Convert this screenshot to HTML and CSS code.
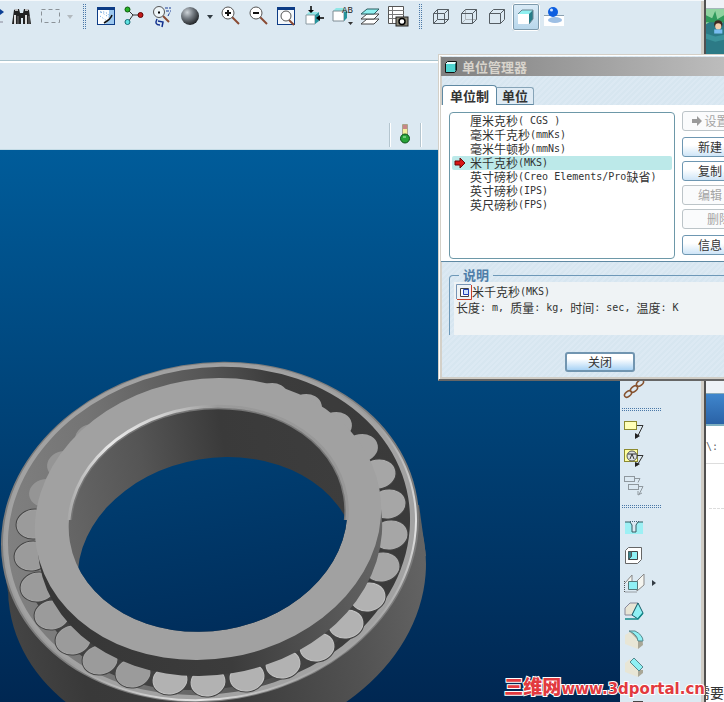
FILE: index.html
```
<!DOCTYPE html>
<html lang="zh-CN">
<head>
  <meta charset="UTF-8" />
  <meta name="viewport" content="width=device-width, initial-scale=1.0" />
  <title>单位管理器</title>
  <link rel="stylesheet" href="styles.css">
</head>
<body>
  <div class="desktop">
    <main class="cad">
      <div class="toolbar">
        <button class="tool tool-cut" aria-label="选项"><svg viewBox="0 0 8 28"><path d="M0 6l4 3-4 3z" fill="#0b3f94"/><path d="M0 19h3" stroke="#889"/></svg></button>
        <button class="tool" aria-label="查找"><svg viewBox="0 0 28 28"><path d="M6 7l2-1h3l1 4h3l1-4h3l2 1 2 14h-8v-6h-2v6H4z" fill="#222"/><path d="M7 7h3M17 7h3" stroke="#bbb" stroke-width="2"/><path d="M7 12v9M18 12v9" stroke="#ddd" stroke-width="2"/><path d="M10 13v8M21 13v8" stroke="#777"/></svg></button>
        <button class="tool" aria-label="选择框"><svg viewBox="0 0 28 28"><rect x="5.500" y="6.500" width="18" height="13" fill="none" stroke="#8b9298" stroke-dasharray="4 3"/></svg></button>
        <button class="drop pale" aria-label="更多选择"></button>
        <span class="grip"></span>
        <button class="tool" aria-label="重画"><svg viewBox="0 0 28 28"><rect x="5.500" y="4.500" width="17" height="17" fill="#fff" stroke="#0d3c86"/><path d="M5 4h18v3H5z" fill="#0d3c86"/><path d="M17 7h5v14h-9l4-4z" fill="#9cc8ef"/><path d="M9 9l9 6M8 13l7 5" stroke="#4f9ae0" stroke-dasharray="1 2"/><path d="M20 12q-1 4-8 8" stroke="#111" stroke-width="1.500" fill="none"/><path d="M8 9q7-1 10 5" stroke="#3a82cc" stroke-dasharray="1 2" fill="none"/></svg></button>
        <button class="tool" aria-label="模型树"><svg viewBox="0 0 28 28"><path d="M8 7l5 5h9M8 19l5-7" stroke="#333" fill="none"/><circle cx="7.500" cy="6.500" r="2.500" fill="#27b327" stroke="#0a5c0a"/><circle cx="20.500" cy="12" r="2.500" fill="#c21a1a" stroke="#5f0505"/><circle cx="7.500" cy="19" r="2.500" fill="#5fe3e3" stroke="#126a72"/></svg></button>
        <button class="tool" aria-label="重定向"><svg viewBox="0 0 28 28"><path d="M15 13l6 6" stroke="#8a4a33" stroke-width="2"/><circle cx="11" cy="9" r="5.500" fill="#eef5f8" stroke="#555"/><path d="M10 9.500h2" stroke="#000" stroke-width="2"/><path d="M17 5h6M18 8h5M20 13l2-4" stroke="#1a3c96" stroke-dasharray="3 1"/><path d="M9 16q-3 6 3 6M10 18l5 1-1 5" stroke="#102f8e" stroke-width="1.500" fill="none"/></svg></button>
        <button class="tool" aria-label="外观库"><svg viewBox="0 0 28 28"><defs><radialGradient id="ball" cx=".35" cy=".3" r=".75"><stop offset="0" stop-color="#cdd3d8"/><stop offset=".45" stop-color="#747b82"/><stop offset="1" stop-color="#1c1f22"/></radialGradient></defs><circle cx="14" cy="13" r="9" fill="url(#ball)"/></svg></button>
        <button class="drop" aria-label="外观选项"></button>
        <button class="tool" aria-label="放大"><svg viewBox="0 0 28 28"><path d="M16 14l7 7" stroke="#8a4a33" stroke-width="2"/><circle cx="12" cy="10" r="6" fill="#fff" stroke="#555"/><path d="M9 10h6M12 7v6" stroke="#111" stroke-width="2"/></svg></button>
        <button class="tool" aria-label="缩小"><svg viewBox="0 0 28 28"><path d="M16 14l7 7" stroke="#8a4a33" stroke-width="2"/><circle cx="12" cy="10" r="6" fill="#fff" stroke="#555"/><path d="M9 10h6" stroke="#111" stroke-width="2"/></svg></button>
        <button class="tool" aria-label="重新调整"><svg viewBox="0 0 28 28"><rect x="5.500" y="4.500" width="17" height="17" fill="#f4f8fb" stroke="#0d3c86"/><path d="M5 4h18v3H5z" fill="#0d3c86"/><path d="M17 17l5 5" stroke="#8a4a33" stroke-width="2"/><circle cx="14" cy="13" r="5" fill="#fff" stroke="#555"/></svg></button>
        <button class="tool" aria-label="视图方向"><svg viewBox="0 0 28 28"><path d="M6 12l3-3h9l-3 3z" fill="#8fe6e6"/><path d="M6 12h9v9H6z" fill="#fff" stroke="#8b9aa2"/><path d="M15 12l4-3v9l-4 3z" fill="#28949c"/><path d="M11 3v6M24 15h-6" stroke="#000" stroke-width="1.500"/><path d="M8 7h6l-3 3zM20 12v6l-4-3z" fill="#000"/></svg></button>
        <button class="tool" aria-label="视图列表"><svg viewBox="0 0 28 28"><path d="M5 8l3-3h8l2 3z" fill="#8fe6e6"/><path d="M5 8h11v10H5z" fill="#fff" stroke="#7f8c94"/><path d="M16 9l3-1v7l-3 3z" fill="#28949c"/><path d="M20 19h5l-2.500 3z" fill="#333"/><text x="14" y="10" class="icon-text">AB</text></svg></button>
        <button class="tool" aria-label="层"><svg viewBox="0 0 28 28"><path d="M5 21l6-5h12l-5 5z" fill="#fff" stroke="#444"/><path d="M5 16l6-5h12l-5 5z" fill="#fff" stroke="#444"/><path d="M5 11l6-5h12l-5 5z" fill="#8ff0f0" stroke="#2c5c60"/></svg></button>
        <button class="tool" aria-label="视图管理器"><svg viewBox="0 0 28 28"><path d="M4.500 3.500h15v17h-15z" fill="#fff" stroke="#555"/><path d="M5 7.500h15M5 11.500h15M5 15.500h8M8.500 4v16" stroke="#777"/><rect x="12" y="14" width="12" height="9" fill="#8b8778" stroke="#222"/><circle cx="18" cy="18.500" r="3" fill="#fff" stroke="#000" stroke-width="1.500"/></svg></button>
        <span class="grip"></span>
        <button class="tool" aria-label="线框"><svg viewBox="0 0 28 28"><path d="M5.500 10.500h11v10h-11zM9.500 6.500h11v10h-11zM5.500 10.500l4-4M16.500 10.500l4-4M5.500 20.500l4-4M16.500 20.500l4-4" fill="none" stroke="#555d63"/></svg></button>
        <button class="tool" aria-label="隐藏线"><svg viewBox="0 0 28 28"><path d="M9.500 6.500v10h11M5.500 20.500l4-4" fill="none" stroke="#adb5ba"/><path d="M5.500 10.500h11v10h-11zM5.500 10.500l4-4h11v10l-4 4M16.500 10.500l4-4" fill="none" stroke="#555d63"/></svg></button>
        <button class="tool" aria-label="消隐"><svg viewBox="0 0 28 28"><path d="M5.500 10.500h11v10h-11zM5.500 10.500l4-4h11v10l-4 4M16.500 10.500l4-4" fill="none" stroke="#555d63"/></svg></button>
        <button class="tool active" aria-label="着色"><svg viewBox="0 0 28 28"><path d="M6 11l4-4h11l-4 4z" fill="#8ff0f0"/><path d="M6 11h11v10H6z" fill="#fff"/><path d="M17 11l4-4v9l-4 5z" fill="#267d88"/><path d="M6 11l4-4h11v9l-4 5" fill="none" stroke="#6a8490"/></svg></button>
        <button class="tool" aria-label="增强真实感"><svg viewBox="0 0 28 28"><path d="M4 12h20v11H4z" fill="#fff"/><path d="M4 12.500h20" stroke="#8aa0b0"/><ellipse cx="15" cy="17" rx="7" ry="3" fill="#9dbfe4"/><circle cx="13" cy="9" r="5" fill="#0d5ee0"/><circle cx="11.500" cy="7" r="1.500" fill="#cfe4ff"/></svg></button>
      </div>

      <div class="dashboard">
        <div class="status">
          <svg viewBox="0 0 12 22"><path d="M3.500 1.500h5v12h-5z" fill="#f3ef9a" stroke="#a9a58a"/><path d="M4 2h4v4H4z" fill="#c98686"/><circle cx="6" cy="15.500" r="4.500" fill="#27a338" stroke="#0c4f18"/><path d="M4 14h3" stroke="#b8f5bf"/></svg>
        </div>
      </div>

      <div class="work">
        <div class="viewport">
          <svg class="model" viewBox="0 150 620 552">
            <defs>
              <linearGradient id="recess"><stop offset="0" stop-color="#808080"/><stop offset=".25" stop-color="#747474"/><stop offset=".55" stop-color="#565656"/><stop offset=".72" stop-color="#3c3c3c"/><stop offset="1" stop-color="#3a3a3a"/></linearGradient>
              <linearGradient id="bore"><stop offset="0" stop-color="#666"/><stop offset=".3" stop-color="#555"/><stop offset=".6" stop-color="#3a3a3a"/><stop offset="1" stop-color="#3d3d3d"/></linearGradient>
              <linearGradient id="body"><stop offset="0" stop-color="#444"/><stop offset=".15" stop-color="#393939"/><stop offset=".5" stop-color="#3c3c3c"/><stop offset=".8" stop-color="#525252"/><stop offset="1" stop-color="#646464"/></linearGradient>
              <linearGradient id="wall"><stop offset="0" stop-color="#363636"/><stop offset=".5" stop-color="#3c3c3c"/><stop offset="1" stop-color="#666"/></linearGradient>
              <linearGradient id="shine" x1="0" y1="0" x2=".7" y2="1"><stop offset="0" stop-color="#a4a4a4"/><stop offset=".6" stop-color="#999"/><stop offset=".86" stop-color="#e4e4e4"/><stop offset="1" stop-color="#999"/></linearGradient>
              <linearGradient id="lip" gradientUnits="userSpaceOnUse" x1="68" y1="0" x2="348" y2="0"><stop offset="0" stop-color="#a6a6a6"/><stop offset=".2" stop-color="#e8e8e8"/><stop offset=".4" stop-color="#d0d0d0"/><stop offset=".6" stop-color="#9a9a9a"/><stop offset="1" stop-color="#989898"/></linearGradient>
              <linearGradient id="deep" gradientUnits="userSpaceOnUse" x1="0" y1="150" x2="0" y2="702"><stop offset="0" stop-color="#005c9a"/><stop offset="1" stop-color="#002752"/></linearGradient>
              <clipPath id="hole"><ellipse cx="208" cy="519" rx="140" ry="112" transform="rotate(-9.500 208 519)"/></clipPath>
              <clipPath id="upper"><path d="M60 390h300v130H60z"/></clipPath>
              <ellipse id="r" rx="17" ry="14" transform="rotate(-9.500)"/>
            </defs>
            <path d="M1 548L8 592L217 620L426 556L419 505z" fill="url(#body)"/>
            <ellipse cx="217" cy="576" rx="210" ry="169" transform="rotate(-9.500 217 576)" fill="url(#body)"/>
            <ellipse cx="210" cy="532" rx="210" ry="169" transform="rotate(-9.500 210 532)" fill="#7c7c7c"/>
            <ellipse cx="210" cy="532" rx="207" ry="167" transform="rotate(-9.500 210 532)" fill="#a2a2a2"/>
            <ellipse cx="210" cy="532" rx="207" ry="167" transform="rotate(-9.500 210 532)" fill="none" stroke="url(#shine)" stroke-width="2"/>
            <ellipse cx="209" cy="531" rx="202" ry="163" transform="rotate(-9.500 209 531)" fill="url(#recess)"/>
            <path d="M35 600q50 90 155 90q130 0 190-100l-50-30H80z" fill="#424242"/>
            <g fill="#959595">
              <use href="#r" x="92" y="438"/><use href="#r" x="64" y="465"/><use href="#r" x="46" y="493"/>
            </g>
            <g fill="#a1a1a1">
              <use href="#r" x="271" y="397"/><use href="#r" x="305" y="408"/><use href="#r" x="335" y="426"/><use href="#r" x="361" y="448"/>
            </g>
            <g stroke="#444" stroke-width="3">
              <use href="#r" x="34" y="524"/><use href="#r" x="32" y="556"/><use href="#r" x="38" y="587"/><use href="#r" x="52" y="615"/><use href="#r" x="73" y="640"/>
              <use href="#r" x="100" y="660"/><use href="#r" x="133" y="673"/><use href="#r" x="170" y="680"/><use href="#r" x="208" y="682"/><use href="#r" x="247" y="677"/>
              <use href="#r" x="283" y="664"/><use href="#r" x="317" y="647"/><use href="#r" x="346" y="624"/><use href="#r" x="368" y="597"/><use href="#r" x="382" y="567"/>
              <use href="#r" x="390" y="535"/><use href="#r" x="388" y="504"/><use href="#r" x="378" y="474"/>
            </g>
            <g fill="#9b9b9b" stroke="#a4a4a4">
              <use href="#r" x="34" y="524"/><use href="#r" x="32" y="556"/><use href="#r" x="38" y="587"/><use href="#r" x="52" y="615"/><use href="#r" x="73" y="640"/><use href="#r" x="100" y="660"/><use href="#r" x="133" y="673"/>
            </g>
            <g fill="#b2b2b2" stroke="#c4c4c4">
              <use href="#r" x="170" y="680"/><use href="#r" x="208" y="682"/><use href="#r" x="247" y="677"/><use href="#r" x="283" y="664"/><use href="#r" x="317" y="647"/><use href="#r" x="346" y="624"/><use href="#r" x="368" y="597"/>
            </g>
            <g fill="#a6a6a6" stroke="#adadad">
              <use href="#r" x="382" y="567"/><use href="#r" x="390" y="535"/><use href="#r" x="388" y="504"/><use href="#r" x="378" y="474"/>
            </g>
            <ellipse cx="210" cy="535" rx="173" ry="140" transform="rotate(-9.500 210 535)" fill="url(#wall)"/>
            <ellipse cx="208" cy="519" rx="174" ry="140" transform="rotate(-9.500 208 519)" fill="#a1a1a1"/>
            <ellipse cx="208" cy="519" rx="140" ry="112" transform="rotate(-9.500 208 519)" fill="url(#bore)"/>
            <g clip-path="url(#hole)"><ellipse cx="217" cy="568" rx="140" ry="110" transform="rotate(-9.500 217 568)" fill="url(#deep)"/></g>
            <g clip-path="url(#upper)" fill="none">
              <ellipse cx="208" cy="519" rx="138" ry="110" transform="rotate(-9.500 208 519)" stroke="#777" stroke-width="2"/>
              <ellipse cx="208" cy="519" rx="140" ry="112" transform="rotate(-9.500 208 519)" stroke="url(#lip)" stroke-width="3"/>
            </g>
          </svg>
        </div>
        <div class="sidebar">
          <button class="tool" aria-label="链"><svg viewBox="0 0 28 28"><g fill="none" stroke="#86522e" stroke-width="1.500"><ellipse cx="8" cy="19" rx="4" ry="2.500" transform="rotate(-40 8 19)"/><ellipse cx="14" cy="14" rx="4" ry="2.500" transform="rotate(-40 14 14)"/><ellipse cx="20" cy="8" rx="4" ry="2.500" transform="rotate(-40 20 8)"/></g></svg></button>
          <span class="rule"></span>
          <button class="tool" aria-label="注释"><svg viewBox="0 0 28 28"><rect x="4.500" y="5.500" width="12" height="8" fill="#ffffb8" stroke="#8c8a30"/><path d="M17 9.500h6l-6 12" fill="none" stroke="#333"/><path d="M15 17v6l5-3z" fill="#222"/></svg></button>
          <button class="tool" aria-label="符号"><svg viewBox="0 0 28 28"><rect x="4.500" y="5.500" width="13" height="12" fill="#ffffa0" stroke="#8c8a30"/><circle cx="12" cy="12" r="5" fill="#dde2e4" stroke="#555"/><path d="M10 15l2-5 2 5M8 10h8M17 11.500h6l-6 10" fill="none" stroke="#333"/><path d="M15 18v5l5-3z" fill="#222"/></svg></button>
          <button class="tool" aria-label="引线"><svg viewBox="0 0 28 28"><g fill="none" stroke="#8f989e"><rect x="4.500" y="4.500" width="10" height="5"/><rect x="8.500" y="12.500" width="10" height="5"/><path d="M15 6.500h5l-2 4M19 14.500h4l-4 8M18 19v4l4-2"/></g></svg></button>
          <span class="rule"></span>
          <button class="tool" aria-label="孔"><svg viewBox="0 0 28 28"><path d="M5 9h18v12H5z" fill="#9df0f4"/><path d="M5 9h5l2 3v7h4v-7l2-3h5" fill="#dce9f2" stroke="#355a60"/><path d="M10 8.500h9" stroke="#467" stroke-dasharray="1 1"/></svg></button>
          <button class="tool" aria-label="壳"><svg viewBox="0 0 28 28"><path d="M5.500 9.500l3-3h13v12l-4 4h-12z" fill="#fff" stroke="#666"/><path d="M8.500 10.500h9v8h-9z" fill="#8ff0f4" stroke="#444"/><path d="M8.500 10.500h3v5l-3 3" fill="#39838a" stroke="#555"/></svg></button>
          <div class="tool-row">
            <button class="tool" aria-label="筋"><svg viewBox="0 0 28 28"><path d="M5 14l7-8v8M17 22l7-6V5l-7 7z" fill="#f5f5f0" stroke="#888"/><path d="M4.500 12v11h13" fill="none" stroke="#555" stroke-dasharray="1 1"/><path d="M8.500 12.500h9v8h-9z" fill="#8ff0f4" stroke="#577"/></svg></button>
            <button class="drop right" aria-label="筋选项"></button>
          </div>
          <button class="tool" aria-label="拔模"><svg viewBox="0 0 28 28"><path d="M5 11l5-5h8l-6 12H5z" fill="#e7e5d5" stroke="#889"/><path d="M12 18l6-12 5 10-5 6z" fill="#8ff0f4" stroke="#155d68"/><path d="M5 22h13l5-6" fill="none" stroke="#188" stroke-width="1.500"/></svg></button>
          <button class="tool" aria-label="倒圆角"><svg viewBox="0 0 28 28"><path d="M9 7q14 1 14 13l-5 4-1-9z" fill="#a9a797"/><path d="M5 10l5-3 8 8v9L5 19z" fill="#e8e6d6"/><path d="M9 6h6q8 4 8 10h-5Q17 9 9 6z" fill="#8ff0f4" stroke="#56878c"/></svg></button>
          <button class="tool" aria-label="倒角"><svg viewBox="0 0 28 28"><path d="M18 17h5v3l-5 4z" fill="#a9a797"/><path d="M5 10l5-4 8 10v8L5 19z" fill="#e8e6d6"/><path d="M10 9l4-4 9 9-4 4z" fill="#8ff0f4" stroke="#56878c"/></svg></button>
          <button class="tool" aria-label="阵列"><svg viewBox="0 0 28 28"><path d="M13 20h10v6H13z" fill="#444"/></svg></button>
        </div>
      </div>
    </main>

    <aside class="browser">
      <div class="browser-top"></div>
      <div class="banner"><svg viewBox="0 0 18 44" preserveAspectRatio="xMinYMin slice"><path d="M0 0h18v44H0z" fill="#2c7a86"/><path d="M0 0h18v12l-6 4-6-5-6 4z" fill="#8fd3a0"/><path d="M0 6l6 3 3-7 2 8 7-4v7H0z" fill="#2f9a5c"/><path d="M0 24l9 3 9-2v5l-9 2-9-3z" fill="#3b939b"/><circle cx="12" cy="15" r="4" fill="#3d2a22"/><circle cx="12" cy="17" r="3" fill="#f3cfae"/><path d="M8 20h8v4H8z" fill="#79bdf0"/></svg></div>
      <div class="browser-gap"></div>
      <div class="browser-bar"></div>
      <div class="browser-item"><span class="mono">\:</span></div>
      <div class="browser-dash"></div>
      <div class="browser-text"><span>需要</span></div>
    </aside>
  </div>

  <section class="dialog" role="dialog" aria-labelledby="dialog-title">
    <header class="titlebar">
      <svg viewBox="0 0 14 14"><path d="M1.500 3.500l2-2h9v9l-2 2h-9z" fill="#e8ffff" stroke="#111"/><path d="M2 4h9v8H2z" fill="#4fd3d0"/><path d="M11 4l1-2v8l-1 2z" fill="#175d60"/></svg>
      <h1 id="dialog-title">单位管理器</h1>
    </header>
    <div class="tabs" role="tablist">
      <button class="tab selected" role="tab" aria-selected="true">单位制</button>
      <button class="tab" role="tab" aria-selected="false">单位</button>
    </div>
    <div class="panel">
      <ul class="units" role="listbox" aria-label="单位制">
        <li role="option">厘米克秒<span class="mono">( CGS )</span></li>
        <li role="option">毫米千克秒<span class="mono">(mmKs)</span></li>
        <li role="option">毫米牛顿秒<span class="mono">(mmNs)</span></li>
        <li role="option" class="current" aria-selected="true"><svg viewBox="0 0 12 12"><path d="M1 4h5V1l5 5-5 5V8H1z" fill="#d81414" stroke="#6b0606"/></svg>米千克秒<span class="mono">(MKS)</span></li>
        <li role="option">英寸磅秒<span class="mono">(Creo Elements/Pro</span>缺省<span class="mono">)</span></li>
        <li role="option">英寸磅秒<span class="mono">(IPS)</span></li>
        <li role="option">英尺磅秒<span class="mono">(FPS)</span></li>
      </ul>
      <div class="actions">
        <button class="btn spaced" disabled><svg viewBox="0 0 12 12"><path d="M1 4h5V1l5 5-5 5V8H1z" fill="#9a9a9a"/></svg>设置<span class="mono">...</span></button>
        <button class="btn">新建<span class="mono">...</span></button>
        <button class="btn">复制<span class="mono">...</span></button>
        <button class="btn" disabled>编辑<span class="mono">...</span></button>
        <button class="btn spaced" disabled>删除</button>
        <button class="btn">信息<span class="mono">...</span></button>
      </div>
    </div>
    <fieldset class="about">
      <legend>说明</legend>
      <div class="about-text">
        <p><svg viewBox="0 0 16 16"><path d="M.5 15V.5H15" fill="none" stroke="#7794b4"/><path d="M1 15.500h14.500V1" fill="none" stroke="#c8402c"/><path d="M4.500 4.500h8v8h-8z" fill="#fff" stroke="#444"/><path d="M7.500 5.500h5v5h-5z" fill="#cfe4ff" stroke="#2342b8"/></svg>米千克秒<span class="mono">(MKS)</span></p>
        <p>长度<span class="mono">: m, </span>质量<span class="mono">: kg, </span>时间<span class="mono">: sec, </span>温度<span class="mono">: K</span></p>
      </div>
    </fieldset>
    <footer class="dialog-foot"><button class="btn primary">关闭</button></footer>
  </section>

  <div class="watermark"><b>三维网</b>www.3dportal.cn</div>
</body>
</html>
```

FILE: styles.css
```
* {
  box-sizing: border-box;
}
body {
  margin: 0;
  height: 100vh;
  overflow: hidden;
  position: relative;
  font-family: "Noto Sans CJK SC", sans-serif;
  font-size: 12px;
  line-height: 14px;
  color: #333;
  background: #fff;
}
button {
  font: inherit;
  color: inherit;
  margin: 0;
  padding: 0;
  border: none;
  background: none;
}
svg {
  display: block;
  flex: none;
}
.mono {
  font-family: "DejaVu Sans Mono", monospace;
  font-size: 10px;
  white-space: pre;
}

/* windows behind the dialog */
.desktop {
  display: flex;
  height: 100%;
}
.cad {
  flex: 1;
  min-width: 0;
  display: flex;
  flex-direction: column;
  background: #dce9f2;
  border-right: 2px solid #505050;
  box-shadow: inset -3px 0 #d0cdc6;
}
.toolbar {
  display: flex;
  height: 63px;
  padding-top: 2px;
  border-top: 1px solid #f4f8fb;
  border-bottom: 2px solid #fff;
  box-shadow: inset 0 -1px #a9c3cd;
}
.tool {
  flex: none;
  width: 28px;
  height: 28px;
  border-radius: 3px;
}
.tool svg {
  width: 100%;
  height: 100%;
}
.tool-cut {
  width: 8px;
}
.tool.active {
  background: linear-gradient(#dcecf7, #b5d5ea);
  box-shadow: inset 0 0 0 1px #fff, inset 0 0 0 2px #7d99ab;
}
.icon-text {
  font: 9px "Liberation Mono", monospace;
  fill: #222;
}
.drop {
  flex: none;
  width: 12px;
  height: 28px;
  display: flex;
  align-items: center;
  justify-content: center;
}
.drop::before {
  content: "";
  border: 3px solid transparent;
  border-top: 4px solid #333c44;
  border-bottom: none;
}
.drop.pale::before {
  border-top-color: #b3babf;
}
.drop.right::before {
  border: 3px solid transparent;
  border-left: 4px solid #333c44;
  border-right: none;
}
.grip,
.rule {
  flex: none;
  background:
    linear-gradient(#dce9f2 50%, transparent 50%) 0 0 / 2px 2px,
    linear-gradient(90deg, #dce9f2 50%, #4a78a8 50%) 0 0 / 2px 2px;
}
.grip {
  width: 4px;
  height: 27px;
  margin: 0 6px;
}
.rule {
  width: 40px;
  height: 4px;
  margin: 4px 0 5px 1px;
}
.dashboard {
  height: 87px;
  padding: 60px 0 2px 389px;
  border-bottom: 1px solid #c3dbe6;
}
.status {
  width: 32px;
  height: 24px;
  display: flex;
  justify-content: center;
  border: solid #b4c5cf;
  border-width: 0 1px;
  box-shadow: 1px 0 #fff, inset 1px 0 #fff;
}
.status svg {
  width: 12px;
  height: 22px;
}
.work {
  flex: 1;
  min-height: 0;
  display: flex;
}
.viewport {
  flex: 1;
  min-width: 0;
  overflow: hidden;
  background: linear-gradient(#005c9a, #002752);
}
.model {
  width: 620px;
  height: 552px;
}
.sidebar {
  width: 84px;
  padding-top: 225px;
  overflow: hidden;
  display: flex;
  flex-direction: column;
}
.tool-row {
  display: flex;
}
.browser {
  width: 18px;
  overflow: hidden;
  display: flex;
  flex-direction: column;
  background: #fff;
}
.browser-top {
  height: 9px;
  background: #eef2f7;
  border-bottom: 1px solid #a5b6bc;
}
.banner {
  height: 45px;
}
.banner svg {
  width: 100%;
  height: 100%;
}
.browser-gap {
  height: 339px;
  background: #eef2f7;
}
.browser-bar {
  height: 33px;
  background: linear-gradient(#3f86cd, #2a62a6);
  border-top: 1px solid #8ab;
  border-bottom: 2px solid #7fb0c0;
}
.browser-item {
  height: 38px;
  padding-top: 12px;
  border-bottom: 1px solid #ddd;
  color: #666;
}
.browser-dash {
  height: 45px;
  margin-left: 3px;
  border-bottom: 1px dashed #ddd;
}
.browser-text {
  display: flex;
  justify-content: flex-end;
  margin-top: auto;
  padding-bottom: 2px;
  font-size: 14px;
  line-height: 16px;
  white-space: nowrap;
}

/* unit manager */
.dialog {
  position: absolute;
  left: 438px;
  top: 54px;
  width: 324px;
  padding: 2px;
  border: 1px solid #d4d0c8;
  border-bottom: 2px solid #666;
  box-shadow: inset 1px 1px #fff, inset 0 -2px #d0cdc6, inset 3px 0 #d4d0c8;
  background: repeating-linear-gradient(135deg, #d7e6f0 0 2px, #dce9f3 2px 4px);
}
.titlebar {
  display: flex;
  align-items: center;
  gap: 4px;
  height: 19px;
  padding-left: 3px;
  background: linear-gradient(90deg, #808080, #c4c4c4);
}
.titlebar svg {
  width: 14px;
  height: 14px;
}
.titlebar h1 {
  margin: 0;
  font-size: 13px;
  line-height: 16px;
  font-weight: bold;
  color: #d8d4cc;
}
.tabs {
  display: flex;
  align-items: flex-end;
  height: 29px;
  padding-left: 1px;
}
.tab {
  height: 18px;
  padding: 0 5px;
  font-size: 13px;
  line-height: 16px;
  font-weight: bold;
  border: 1px solid #86a4b8;
  border-left: none;
  border-bottom-color: #5f89a3;
  border-top-right-radius: 3px;
  background: #dfebf4;
}
.tab.selected {
  height: 20px;
  padding: 0 7px;
  border: 1px solid #5f89a3;
  border-bottom: none;
  border-radius: 4px 4px 0 0;
  background: #fff;
}
.panel {
  display: flex;
  gap: 7px;
  padding: 6px 0 2px 8px;
  background: #fff;
  border-bottom: 1px solid #5f89a3;
}
.units {
  width: 226px;
  height: 147px;
  margin: 1px 0 0;
  padding: 1px 2px;
  list-style: none;
  border: 1px solid #6d98a8;
  border-radius: 4px;
}
.units li {
  display: flex;
  align-items: center;
  height: 14px;
  padding-left: 18px;
  border-radius: 2px;
}
.units .current {
  padding-left: 2px;
  background: #bce9e9;
}
.units .current svg {
  width: 12px;
  height: 12px;
  margin-right: 4px;
}
.actions {
  display: flex;
  flex-direction: column;
  gap: 4px;
}
.btn {
  display: flex;
  align-items: center;
  justify-content: center;
  width: 74px;
  height: 20px;
  border: 1px solid #6e97b2;
  border-radius: 3px;
  background: linear-gradient(#fff 40%, #cfe5f7);
}
.btn.spaced {
  margin-bottom: 2px;
}
.btn:disabled {
  color: #a5a5a5;
  border-color: #bcc4c8;
  background: #fafbfc;
}
.btn svg {
  width: 12px;
  height: 12px;
  margin-right: 1px;
}
.about {
  margin: 6px 8px 0;
  padding: 0 0 0 4px;
  border: 1px solid #6d98b8;
  border-bottom: none;
  border-radius: 4px 4px 0 0;
}
.about legend {
  margin-left: 5px;
  padding: 0 4px;
  font-size: 13px;
  line-height: 14px;
  font-weight: bold;
  color: #4f7ea8;
}
.about-text {
  height: 53px;
  padding: 2px;
  background: #eff3f5;
}
.about-text p {
  display: flex;
  align-items: center;
  height: 16px;
  margin: 0;
}
.about-text svg {
  width: 16px;
  height: 16px;
}
.dialog-foot {
  display: flex;
  justify-content: center;
  padding: 17px 0 5px;
}
.btn.primary {
  width: 70px;
  border: 2px solid #7195b0;
  background: linear-gradient(#fff 30%, #a9d3f5);
}

.watermark {
  position: absolute;
  right: 19px;
  bottom: 4px;
  font: bold 15px/18px "DejaVu Sans", "Noto Sans CJK SC", sans-serif;
  color: #e23a3f;
  -webkit-text-stroke: 2px #fff;
  paint-order: stroke fill;
  white-space: nowrap;
}
.watermark b {
  font-size: 19px;
}
```
